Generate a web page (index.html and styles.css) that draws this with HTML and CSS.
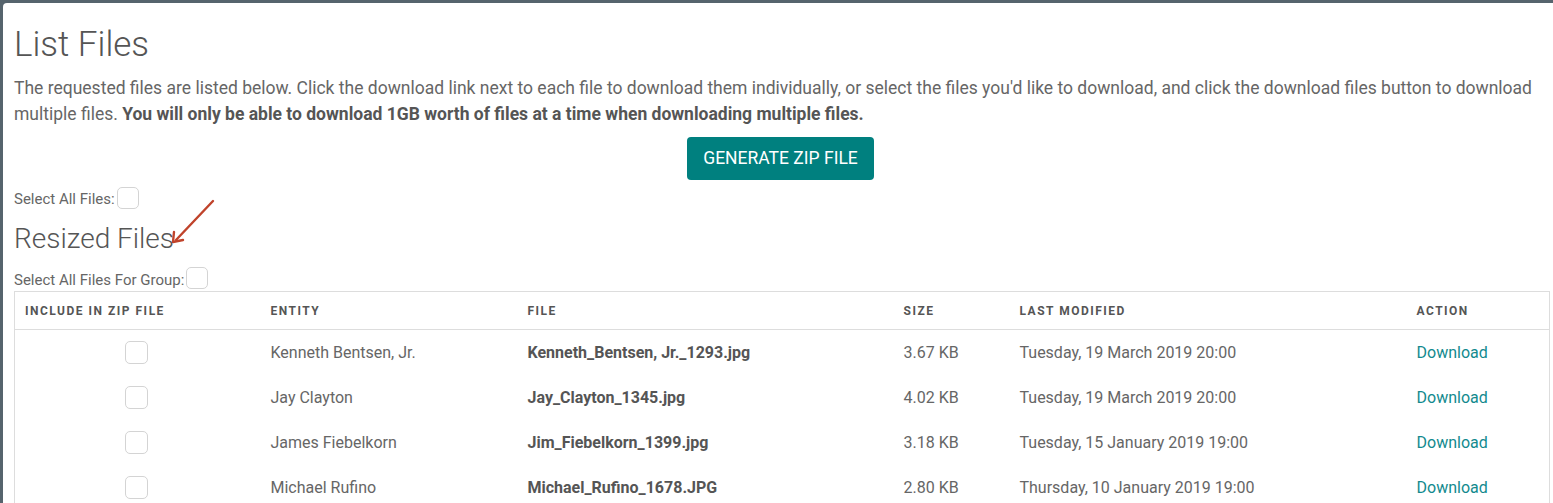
FILE: index.html
```html
<!DOCTYPE html>
<html>
<head>
<meta charset="utf-8">
<link rel="stylesheet" href="styles.css">
</head>
<body>
<div class="panel">
  <h1 class="title">List Files</h1>
  <p class="intro">The requested files are listed below. Click the download link next to each file to download them individually, or select the files you'd like to download, and click the download files button to download multiple files. <strong>You will only be able to download 1GB worth of files at a time when downloading multiple files.</strong></p>
  <div class="btn-row"><button class="btn">GENERATE ZIP FILE</button></div>
  <div class="select-row select-all"><span>Select All Files:</span><span class="cb"></span></div>
  <h2 class="group-title">Resized Files</h2>
  <div class="select-row select-group"><span>Select All Files For Group:</span><span class="cb"></span></div>
  <table class="files">
    <colgroup>
      <col class="c1"><col class="c2"><col class="c3"><col class="c4"><col class="c5"><col class="c6">
    </colgroup>
    <thead>
      <tr><th>Include in zip file</th><th>Entity</th><th>File</th><th>Size</th><th>Last Modified</th><th>Action</th></tr>
    </thead>
    <tbody>
      <tr><td class="cbcell"><span class="cb"></span></td><td>Kenneth Bentsen, Jr.</td><td class="fname">Kenneth_Bentsen, Jr._1293.jpg</td><td>3.67 KB</td><td>Tuesday, 19 March 2019 20:00</td><td><a class="dl">Download</a></td></tr>
      <tr><td class="cbcell"><span class="cb"></span></td><td>Jay Clayton</td><td class="fname">Jay_Clayton_1345.jpg</td><td>4.02 KB</td><td>Tuesday, 19 March 2019 20:00</td><td><a class="dl">Download</a></td></tr>
      <tr><td class="cbcell"><span class="cb"></span></td><td>James Fiebelkorn</td><td class="fname">Jim_Fiebelkorn_1399.jpg</td><td>3.18 KB</td><td>Tuesday, 15 January 2019 19:00</td><td><a class="dl">Download</a></td></tr>
      <tr><td class="cbcell"><span class="cb"></span></td><td>Michael Rufino</td><td class="fname">Michael_Rufino_1678.JPG</td><td>2.80 KB</td><td>Thursday, 10 January 2019 19:00</td><td><a class="dl">Download</a></td></tr>
    </tbody>
  </table>
</div>
<svg class="arrow" width="60" height="60" viewBox="0 0 60 60">
  <line x1="47" y1="5" x2="10" y2="44" stroke="#c0432b" stroke-width="2.4" stroke-linecap="round"/>
  <polyline points="8,36 7,46 17,44" fill="none" stroke="#c0432b" stroke-width="2.4" stroke-linecap="round" stroke-linejoin="round"/>
</svg>
</body>
</html>
```
FILE: styles.css
```css
html, body {
  margin: 0;
  padding: 0;
}
body {
  background: #56646d;
  font-family: Roboto, "Liberation Sans", sans-serif;
  color: #666;
  height: 503px;
  overflow: hidden;
  position: relative;
}
.panel {
  margin: 3px 0 0 3px;
  background: #fff;
  border-top-left-radius: 4px;
  padding: 0 3px 40px 11px;
  min-height: 500px;
  box-sizing: border-box;
}
.title {
  margin: 0;
  padding-top: 23px;
  font-size: 35px;
  font-weight: 300;
  line-height: 1.1;
  color: #555;
}
.intro {
  margin: 10px 0 0;
  font-size: 17.5px;
  line-height: 26px;
  color: #666;
}
.intro strong {
  font-weight: 700;
  color: #555;
}
.btn-row {
  display: flex;
  justify-content: center;
  margin-top: 10px;
  padding-right: 3px;
}
.btn {
  background: #00807f;
  color: #fff;
  border: none;
  border-radius: 4px;
  font-family: Roboto, "Liberation Sans", sans-serif;
  font-size: 17.5px;
  height: 43px;
  padding: 0 10px;
  width: 187px;
}
.select-row {
  display: flex;
  align-items: center;
  font-size: 15px;
  color: #666;
  height: 22px;
}
.select-row > span:first-child {
  padding-top: 3px;
  margin-right: 2px;
}
.select-all {
  margin-top: 7px;
}
.cb {
  display: inline-block;
  width: 21px;
  height: 21px;
  border: 1px solid #d4d4d4;
  border-radius: 5px;
  box-sizing: border-box;
  background: #fff;
}
.select-row .cb {
  width: 22px;
  height: 22px;
}
.group-title {
  margin: 15px 0 0;
  font-size: 28px;
  font-weight: 300;
  line-height: 1.1;
  color: #555;
}
.select-group {
  margin-top: 13px;
}
.files {
  margin-top: 2px;
  width: 1536px;
  border-collapse: collapse;
  table-layout: fixed;
  border: 1px solid #ddd;
}
.c1 { width: 244px; }
.c2 { width: 257px; }
.c3 { width: 376px; }
.c4 { width: 116px; }
.c5 { width: 397px; }
.c6 { width: auto; }
.files th {
  text-align: left;
  font-size: 12px;
  font-weight: 700;
  letter-spacing: 1.5px;
  text-transform: uppercase;
  color: #555;
  height: 37px;
  padding: 0 0 0 12px;
  border-bottom: 1px solid #ddd;
  vertical-align: middle;
}
.files th:first-child {
  padding-left: 10px;
}
.files td {
  height: 45px;
  padding: 0 0 0 12px;
  font-size: 16px;
  color: #666;
  vertical-align: middle;
}
.files td.cbcell {
  padding: 0;
  text-align: center;
}
.files td.cbcell .cb {
  vertical-align: middle;
  width: 23px;
  height: 23px;
}
.files td.fname {
  font-weight: 700;
  color: #555;
}
.dl {
  color: #128a8e;
  text-decoration: none;
}
.arrow {
  position: absolute;
  left: 166px;
  top: 196px;
}
```
